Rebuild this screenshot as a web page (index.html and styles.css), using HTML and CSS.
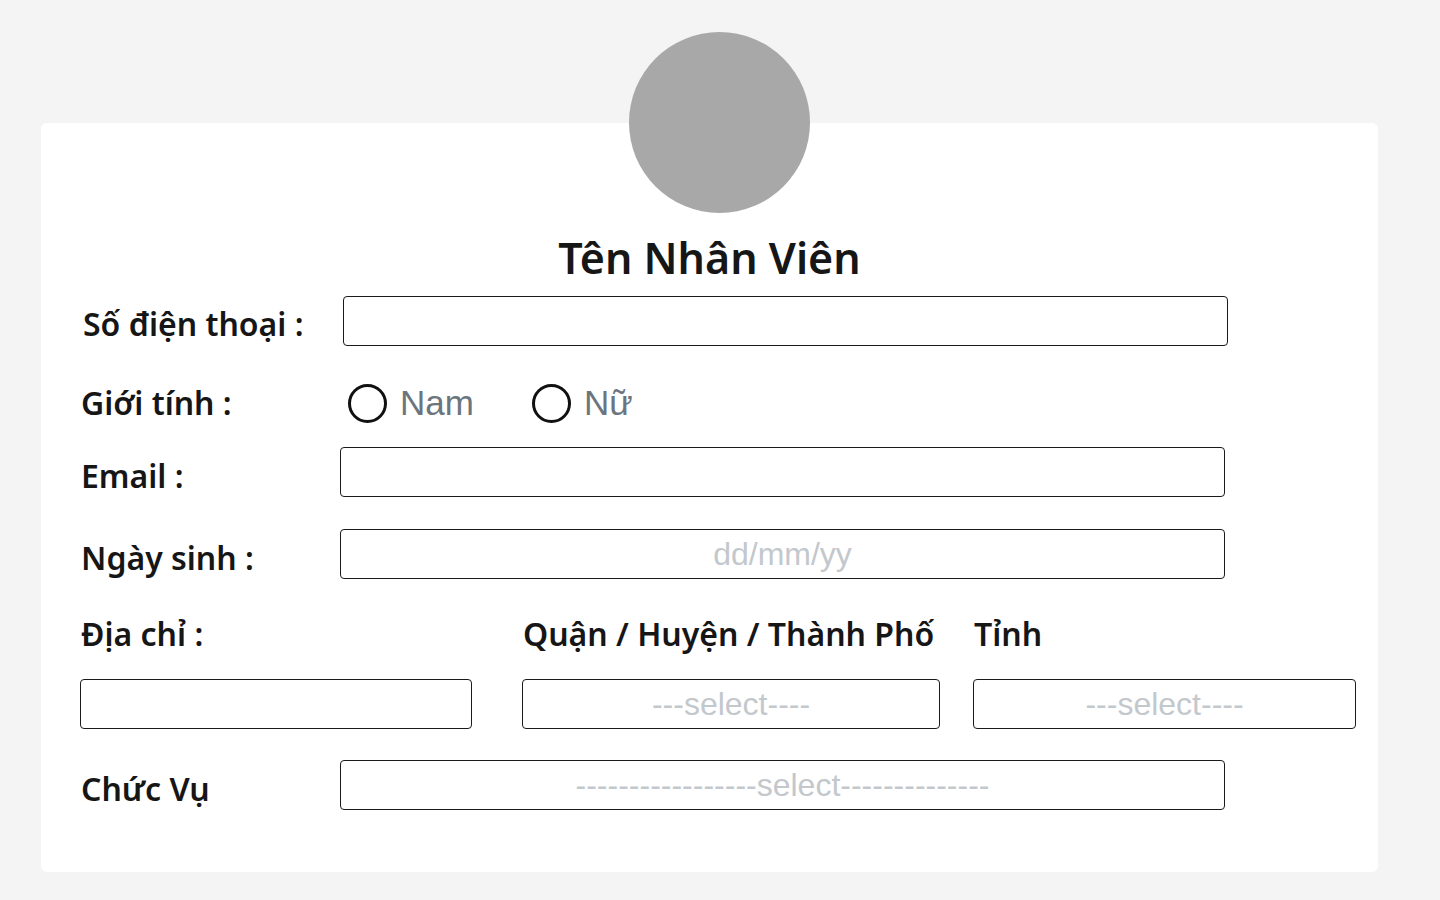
FILE: index.html
```html
<!DOCTYPE html>
<html lang="vi">
<head>
<meta charset="utf-8">
<title>Nhân Viên</title>
<link rel="stylesheet" href="styles.css">
</head>
<body>
<div class="page">
  <div class="card">
    <div class="avatar"></div>
    <h1 class="title">Tên Nhân Viên</h1>

    <div class="row row-phone">
      <label class="label label-phone">Số điện thoại :</label>
      <input class="field field-phone" type="text">
    </div>

    <div class="row row-gender">
      <span class="label">Giới tính :</span>
      <div class="radios">
        <label class="radio"><input type="radio" name="gt"><span>Nam</span></label>
        <label class="radio"><input type="radio" name="gt"><span>Nữ</span></label>
      </div>
    </div>

    <div class="row row-email">
      <label class="label">Email :</label>
      <input class="field" type="text">
    </div>

    <div class="row row-dob">
      <label class="label">Ngày sinh :</label>
      <input class="field center" type="text" placeholder="dd/mm/yy">
    </div>

    <div class="addr-labels">
      <span class="label addr-l1">Địa chỉ :</span>
      <span class="label addr-l2">Quận / Huyện / Thành Phố</span>
      <span class="label addr-l3">Tỉnh</span>
    </div>
    <div class="addr-fields">
      <input class="field addr-f1" type="text">
      <select class="field sel addr-f2"><option>---select----</option></select>
      <select class="field sel addr-f3"><option>---select----</option></select>
    </div>

    <div class="row row-role">
      <label class="label">Chức Vụ</label>
      <select class="field sel"><option>-----------------select--------------</option></select>
    </div>
  </div>
</div>
</body>
</html>
```

FILE: styles.css
```css
* { box-sizing: border-box; }
html, body { margin: 0; padding: 0; }
body {
  background: #f4f4f4;
  font-family: "Noto Sans", "Liberation Sans", sans-serif;
  color: #161616;
}
.page {
  padding-top: 123px;
  padding-left: 41px;
}
.card {
  display: flow-root;
  width: 1337px;
  height: 749px;
  background: #ffffff;
  border-radius: 6px;
  padding: 0 40px;
}
.avatar {
  width: 181px;
  height: 181px;
  border-radius: 50%;
  background: #a8a8a8;
  margin: -91px auto 0;
  position: relative;
  left: 10px;
}
.title {
  margin: 17px 0 0;
  text-align: center;
  font-size: 43px;
  font-weight: 560;
  line-height: 56px;
  color: #161616;
}
.row {
  display: flex;
  align-items: center;
}
.label {
  font-size: 32px;
  font-weight: 560;
  line-height: 40px;
  color: #161616;
  flex: none;
}
.row .label {
  width: 259px;
  padding-top: 7px;
}
.field {
  flex: none;
  width: 885px;
  height: 50px;
  border: 1px solid #1a1a1a;
  border-radius: 4px;
  background: #fff;
  font-family: "Liberation Sans", Arial, sans-serif;
  font-size: 32px;
  color: #333;
  padding: 0 12px;
  outline: none;
}
.field::placeholder { color: #c3c8cc; }
.center { text-align: center; }
.sel {
  appearance: none;
  -webkit-appearance: none;
  color: #c3c8cc;
  text-align: center;
  text-align-last: center;
}
.row-phone { margin-top: 10px; }
.row .label-phone { padding-left: 2px; padding-top: 6px; }
.field-phone { margin-left: 3px; }
.row-gender { margin-top: 37px; }
.row-gender .label { padding-top: 0; }
.radios { display: flex; gap: 58px; margin-left: 8px; }
.radio {
  display: flex;
  align-items: center;
  gap: 13px;
  font-family: "Liberation Sans", Arial, sans-serif;
  font-size: 35px;
  color: #6c757d;
}
.radio input {
  appearance: none;
  -webkit-appearance: none;
  width: 39px;
  height: 39px;
  margin: 0;
  border: 3px solid #111;
  border-radius: 50%;
  background: #fff;
}
.row-email { margin-top: 24px; }
.row-dob { margin-top: 32px; }
.addr-labels {
  display: flex;
  margin-top: 35px;
}
.addr-l1 { width: 442px; }
.addr-l2 { width: 451px; }
.addr-fields {
  display: flex;
  margin-top: 25px;
  margin-left: -1px;
}
.addr-f1 { width: 392px; margin-right: 50px; }
.addr-f2 { width: 418px; margin-right: 33px; }
.addr-f3 { width: 383px; }
.row-role { margin-top: 31px; }
```
